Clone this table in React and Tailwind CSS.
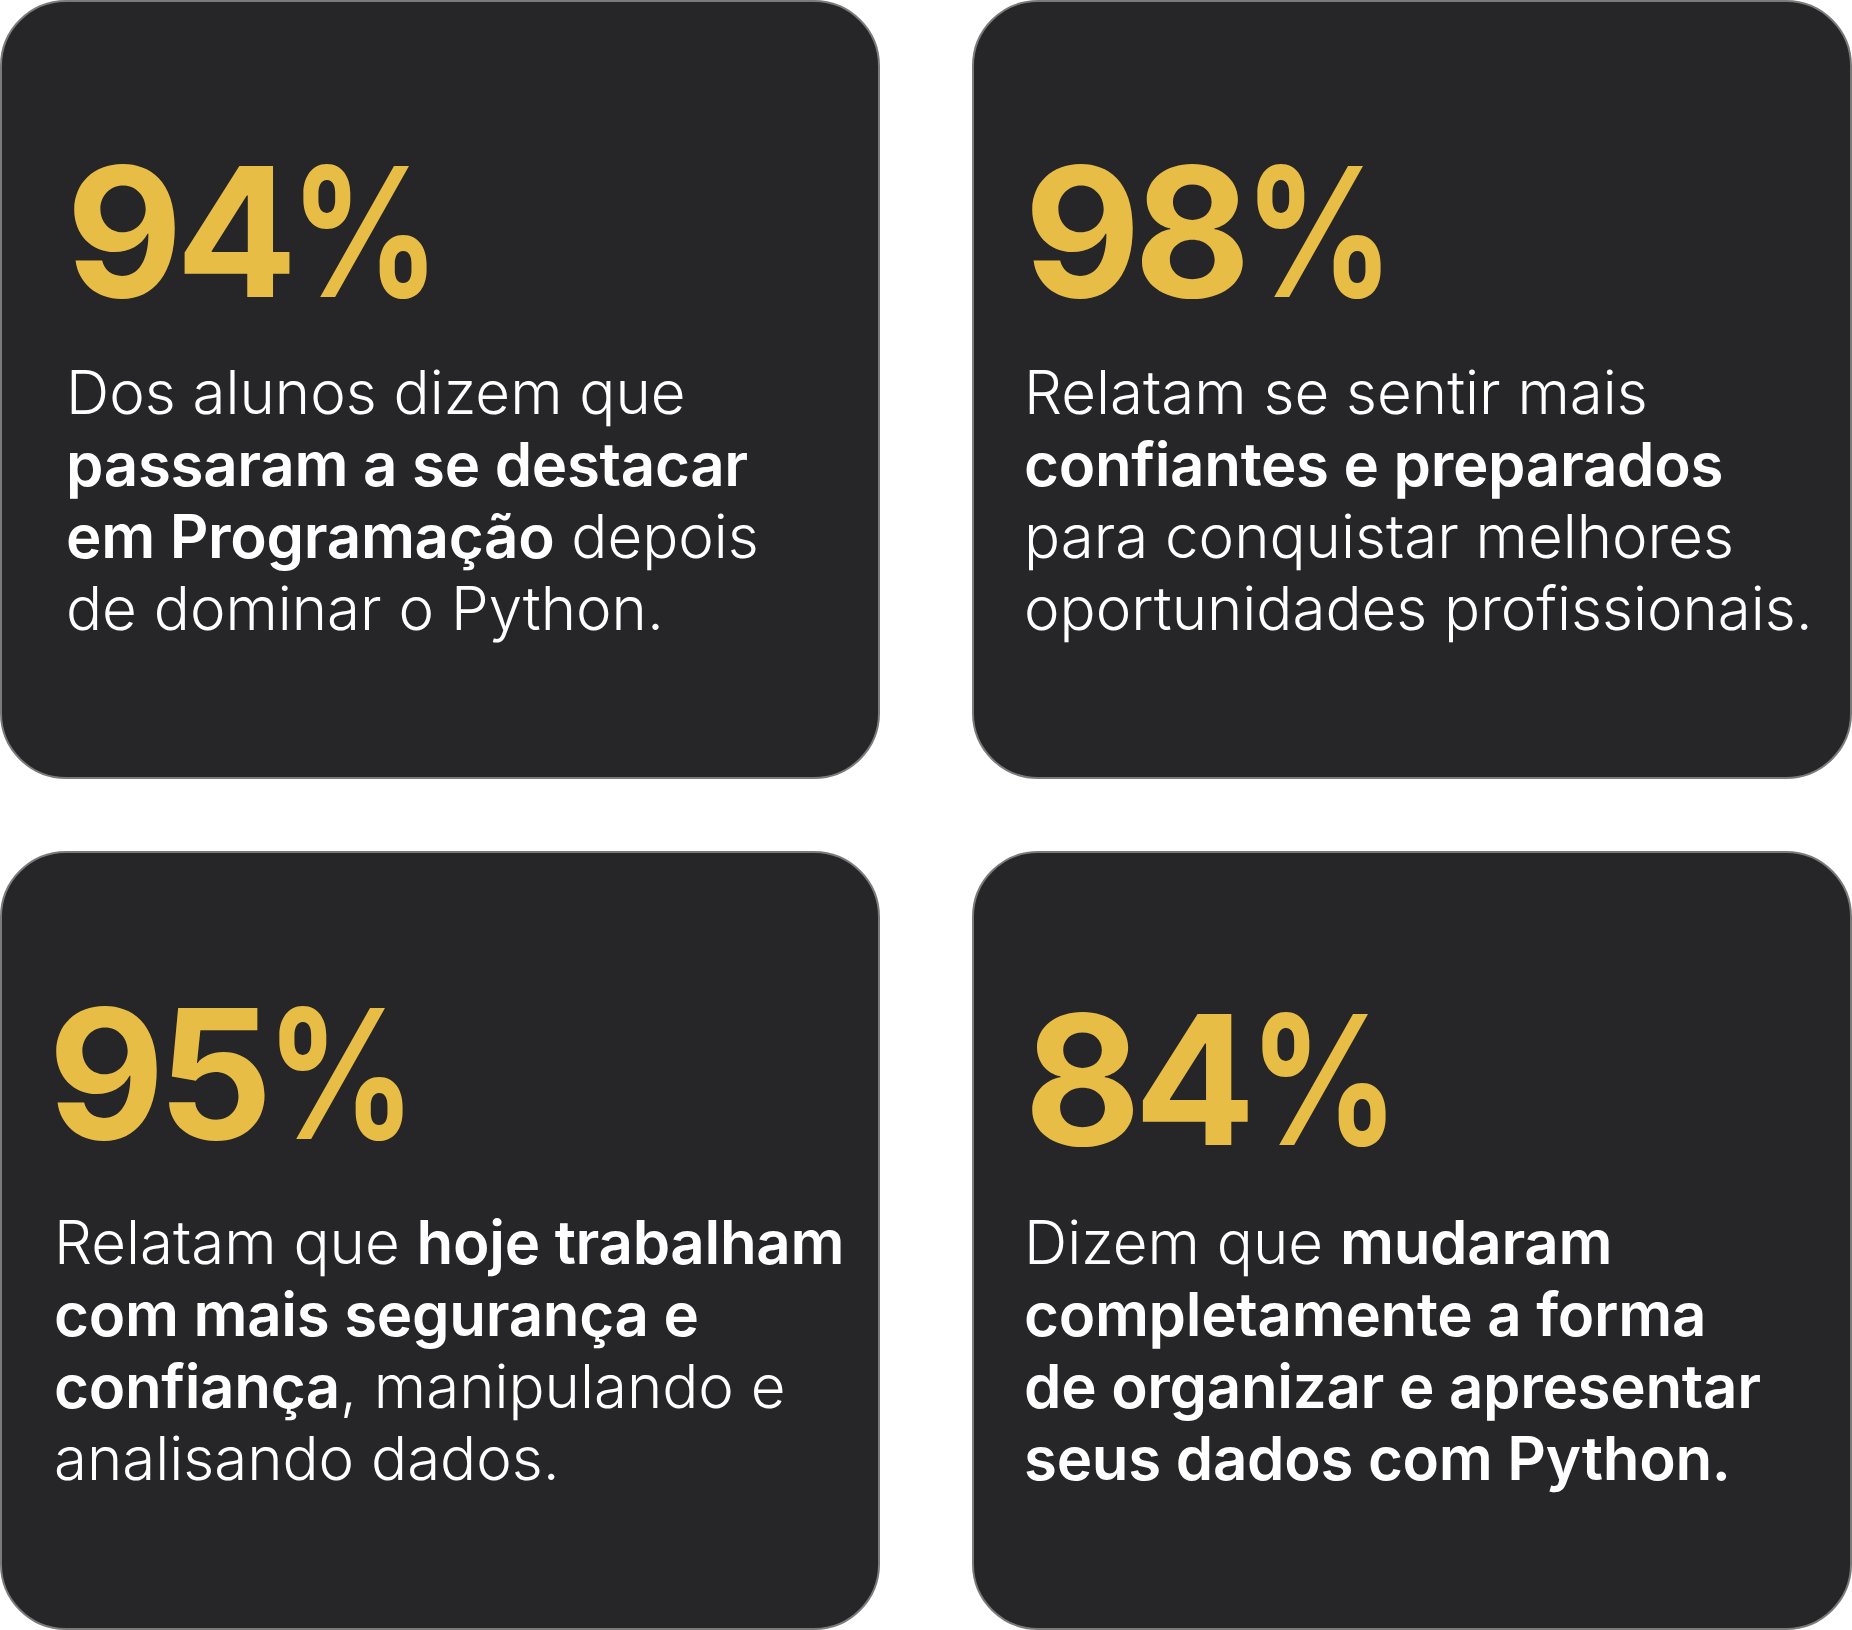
const CARDS = [
  {
    value: '94',
    pad: 'pl-[64px] pt-[140px]',
    gap: 'mt-[34px]',
    lines: [
      [{ t: 'Dos alunos dizem que' }],
      [{ t: 'passaram a se destacar', b: true }],
      [{ t: 'em Programação', b: true }, { t: ' depois' }],
      [{ t: 'de dominar o Python.' }],
    ],
  },
  {
    value: '98',
    pad: 'pl-[50px] pt-[140px]',
    gap: 'mt-[34px]',
    lines: [
      [{ t: 'Relatam se sentir mais' }],
      [{ t: 'confiantes e preparados', b: true }],
      [{ t: 'para conquistar melhores' }],
      [{ t: 'oportunidades profissionais.' }],
    ],
  },
  {
    value: '95',
    pad: 'pl-[46px] pt-[131px]',
    gap: 'mt-[42px] ml-[6px]',
    lines: [
      [{ t: 'Relatam que ' }, { t: 'hoje trabalham', b: true }],
      [{ t: 'com mais segurança e', b: true }],
      [{ t: 'confiança', b: true }, { t: ', manipulando e' }],
      [{ t: 'analisando dados.' }],
    ],
  },
  {
    value: '84',
    pad: 'pl-[50px] pt-[137px]',
    gap: 'mt-[36px]',
    lines: [
      [{ t: 'Dizem que ' }, { t: 'mudaram', b: true }],
      [{ t: 'completamente a forma', b: true }],
      [{ t: 'de organizar e apresentar', b: true }],
      [{ t: 'seus dados com Python.', b: true }],
    ],
  },
]

function StatCard({ card }) {
  return (
    <div
      className={`h-[779px] rounded-[66px] border-2 border-[#7a7a7a] bg-[#262527] ${card.pad}`}
    >
      <div className="text-[180px] font-bold leading-none tracking-[-0.04em] text-[#e8bd46]">
        {card.value}
        {/* the % in the design is narrower than Inter's */}
        <span className="inline-block origin-left scale-x-[0.82]">%</span>
      </div>
      <p className={`${card.gap} whitespace-nowrap text-[60px] font-light leading-[72px] text-white`}>
        {card.lines.map((line, i) => (
          <span key={i} className="block">
            {line.map((part, j) =>
              part.b ? (
                <strong key={j} className="font-semibold tracking-[-0.005em]">
                  {part.t}
                </strong>
              ) : (
                <span key={j}>{part.t}</span>
              ),
            )}
          </span>
        ))}
      </p>
    </div>
  )
}

export default function App() {
  return (
    <div
      className="grid h-[1630px] w-[1852px] grid-cols-2 gap-x-[92px] gap-y-[72px] bg-white"
      style={{ fontFamily: 'Inter, "Noto Sans", sans-serif' }}
    >
      {CARDS.map((card) => (
        <StatCard key={card.value} card={card} />
      ))}
    </div>
  )
}
